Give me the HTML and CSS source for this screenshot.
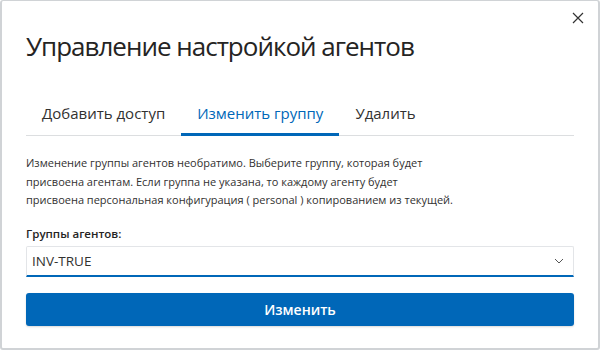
FILE: index.html
```html
<!DOCTYPE html>
<html lang="ru">
<head>
  <meta charset="UTF-8">
  <title>Управление настройкой агентов</title>
  <link rel="stylesheet" href="styles.css">
</head>
<body>

  <div class="dialog">
    <button type="button" class="dialog-close" aria-label="Закрыть">
      <svg width="12" height="12" viewBox="0 0 12 12">
        <path d="M1 1 L11 11 M11 1 L1 11" stroke="#333" stroke-width="1.2" fill="none"/>
      </svg>
    </button>

    <h1 class="dialog-title">Управление настройкой агентов</h1>

    <ul class="tabs">
      <li class="tab">Добавить доступ</li>
      <li class="tab is-active">Изменить группу</li>
      <li class="tab">Удалить</li>
    </ul>

    <p class="note">
      Изменение группы агентов необратимо. Выберите группу, которая будет<br>
      присвоена агентам. Если группа не указана, то каждому агенту будет<br>
      присвоена персональная конфигурация ( personal ) копированием из текущей.
    </p>

    <label class="field-label">Группы агентов:</label>
    <div class="select">
      <span class="select-value">INV-TRUE</span>
      <svg class="select-arrow" width="10" height="6" viewBox="0 0 10 6">
        <path d="M1 1 L5 5 L9 1" stroke="#555" stroke-width="1" fill="none"/>
      </svg>
    </div>

    <button type="button" class="button is-primary">Изменить</button>
  </div>

</body>
</html>
```

FILE: styles.css
```css
html, body {
  height: 100%;
}
body {
  margin: 0;
  font-family: "Open Sans", "Noto Sans", sans-serif;
  color: #323130;
  background: #fff;
}
.dialog {
  position: relative;
  box-sizing: border-box;
  height: 350px;
  padding: 25px 24px 0 24px;
  border: 1px solid #d0d3d6;
  border-width: 1px 2px 2px 2px;
  border-radius: 3px;
  background: #fff;
}
.dialog-close {
  position: absolute;
  top: 11px;
  right: 14px;
  padding: 0;
  border: 0;
  background: none;
  width: 12px;
  height: 12px;
  display: flex;
}
.dialog-title {
  margin: 0;
  font-size: 26px;
  font-weight: 400;
  letter-spacing: -1px;
  line-height: 40px;
  color: #252423;
}
.tabs {
  display: flex;
  margin: 29px 0 0 0;
  padding: 0;
  list-style: none;
  border-bottom: 1px solid #dcdee0;
}
.tab {
  padding: 0 16px 2px 16px;
  font-size: 15px;
  line-height: 36px;
  color: #323130;
  border-bottom: 3px solid transparent;
  margin-bottom: -1px;
}
.tab.is-active {
  color: #0067b8;
  border-bottom-color: #0067b8;
}
.note {
  margin: 18px 0 0 0;
  font-size: 11px;
  line-height: 18.5px;
  color: #323130;
}
.field-label {
  display: block;
  margin-top: 16px;
  font-size: 11.5px;
  font-weight: 600;
  line-height: 16px;
  color: #252423;
}
.select {
  display: flex;
  align-items: center;
  justify-content: space-between;
  box-sizing: border-box;
  height: 31px;
  margin-top: 4px;
  padding: 0 9px 0 5px;
  border: 1px solid #e3e5e8;
  border-bottom: 2px solid #0067b8;
  border-radius: 2px 2px 0 0;
}
.select-value {
  font-size: 13.5px;
  color: #323130;
}
.button.is-primary {
  display: block;
  width: 100%;
  height: 33px;
  margin-top: 16px;
  border: 0;
  border-radius: 3px;
  font-family: inherit;
  font-size: 14px;
  font-weight: 600;
  color: #fff;
  background: #0067b8;
  box-shadow: 0 1px 2px rgba(0, 0, 0, 0.15);
}
```
